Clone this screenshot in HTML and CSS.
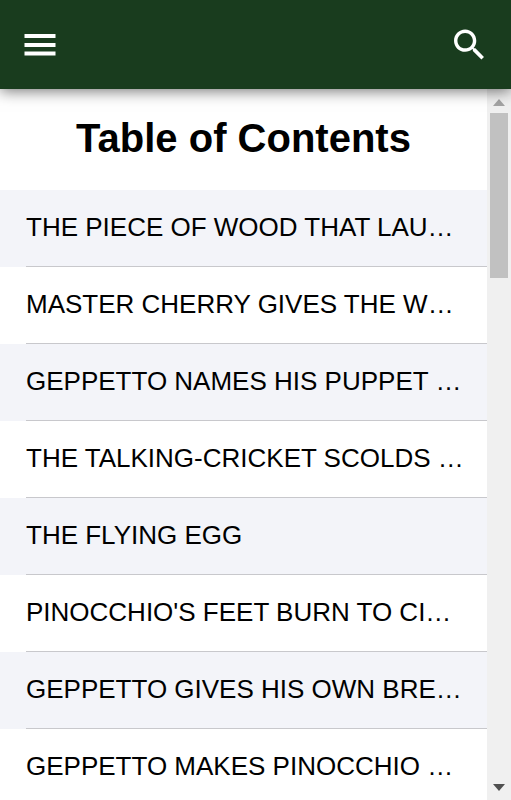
FILE: index.html
```html
<!DOCTYPE html>
<html lang="en">
<head>
    <meta charset="UTF-8">
    <meta name="viewport" content="width=device-width, initial-scale=1.0">
    <title>Table of Contents</title>
    <link rel="stylesheet" href="styles.css">
</head>
<body>
    <header class="toolbar">
        <button type="button" aria-label="Menu">
            <svg viewBox="0 0 32 22" width="32" height="22"><path d="M.5 0h31v4H.5zM.5 9h31v4H.5zM.5 17.500h31v4H.5z"/></svg>
        </button>
        <button type="button" aria-label="Search">
            <svg viewBox="3 3 17.5 17.5" width="30" height="31"><path d="M15.5 14h-.79l-.28-.27C15.41 12.59 16 11.11 16 9.5 16 5.91 13.09 3 9.5 3S3 5.91 3 9.5 5.91 16 9.5 16c1.61 0 3.09-.59 4.23-1.57l.27.28v.79l5 4.99L20.49 19l-4.99-5zm-6 0C7.01 14 5 11.99 5 9.5S7.01 5 9.5 5 14 7.01 14 9.5 11.99 14 9.5 14z"/></svg>
        </button>
    </header>

    <div class="content">
        <main>
            <h1>Table of Contents</h1>
            <ul class="chapters">
                <li><a href="#chapter-1">THE PIECE OF WOOD THAT LAUGHED AND CRIED LIKE A CHILD</a></li>
                <li><a href="#chapter-2">MASTER CHERRY GIVES THE WOOD AWAY</a></li>
                <li><a href="#chapter-3">GEPPETTO NAMES HIS PUPPET PINOCCHIO</a></li>
                <li><a href="#chapter-4">THE TALKING-CRICKET SCOLDS PINOCCHIO</a></li>
                <li><a href="#chapter-5">THE FLYING EGG</a></li>
                <li><a href="#chapter-6">PINOCCHIO'S FEET BURN TO CINDERS</a></li>
                <li><a href="#chapter-7">GEPPETTO GIVES HIS OWN BREAKFAST TO PINOCCHIO</a></li>
                <li><a href="#chapter-8">GEPPETTO MAKES PINOCCHIO NEW FEET</a></li>
            </ul>
        </main>
        <div class="scrollbar" aria-hidden="true">
            <svg class="arrow-up" viewBox="0 0 12 7" width="12" height="7"><path d="M0 7l6-7 6 7z"/></svg>
            <div class="track"><div class="thumb"></div></div>
            <svg class="arrow-down" viewBox="0 0 12 7" width="12" height="7"><path d="M0 0l6 7 6-7z"/></svg>
        </div>
    </div>
</body>
</html>
```

FILE: styles.css
```css
* {
    box-sizing: border-box;
}

body {
    font-family: "Liberation Sans", Arial, sans-serif;
    background-color: #fff;
    color: #000;
    margin: 0;
    height: 100vh;
    display: flex;
    flex-direction: column;
    overflow: hidden;
}

.toolbar {
    position: relative;
    flex: none;
    display: flex;
    align-items: center;
    justify-content: space-between;
    height: 89px;
    padding: 0 18px 0 16px;
    background-color: #193c1e;
    box-shadow: 0 2px 14px rgba(0, 0, 0, 0.55);
}

.toolbar button {
    display: flex;
    align-items: center;
    justify-content: center;
    width: 48px;
    height: 48px;
    padding: 0;
    border: none;
    background: none;
    cursor: pointer;
}

.toolbar svg {
    fill: #fff;
}

.content {
    flex: 1;
    min-height: 0;
    display: flex;
}

main {
    flex: 1;
    min-width: 0;
    overflow: hidden;
}

h1 {
    font-size: 40px;
    line-height: 46px;
    margin: 26px 0 29px;
    text-align: center;
}

.chapters {
    list-style: none;
    margin: 0;
    padding: 0;
}

.chapters li {
    padding-left: 26px;
}

.chapters li:nth-child(odd) {
    background-color: #f3f4f9;
}

.chapters a {
    display: block;
    height: 77px;
    padding-right: 20px;
    border-bottom: 1px solid #c8c8cc;
    color: inherit;
    font-size: 26px;
    line-height: 74px;
    text-decoration: none;
    white-space: nowrap;
    overflow: hidden;
    text-overflow: ellipsis;
}

/* Scrollbar */
.scrollbar {
    flex: none;
    display: flex;
    flex-direction: column;
    align-items: center;
    justify-content: space-between;
    width: 24px;
    padding: 10px 3px 9px;
    background-color: #f0f0f0;
}

.track {
    flex: 1;
    width: 100%;
    padding: 7px 0;
}

.thumb {
    height: 165px;
    background-color: #c1c1c1;
}

.arrow-up {
    fill: #a3a3a3;
}

.arrow-down {
    fill: #505050;
}
```
